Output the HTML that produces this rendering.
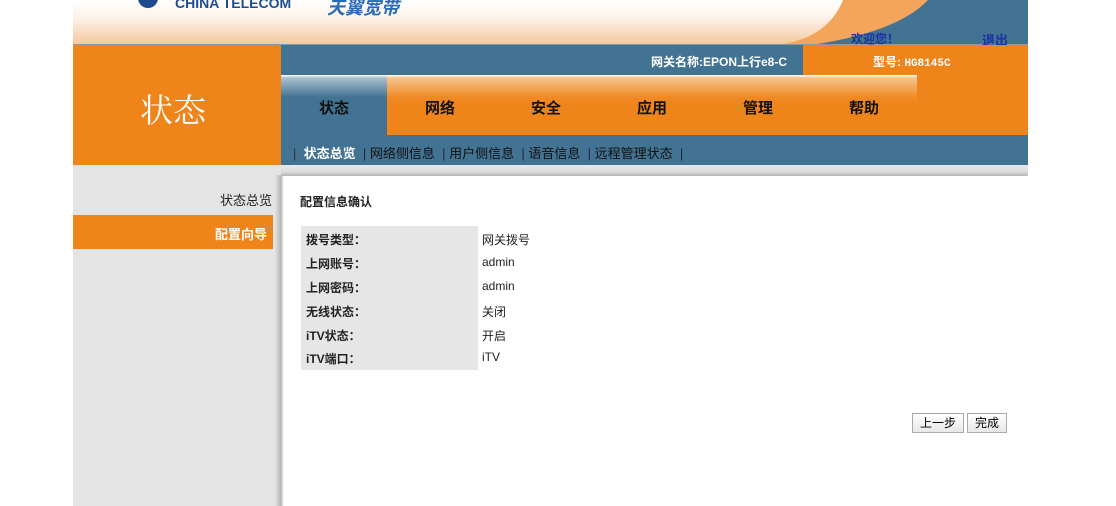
<!DOCTYPE html>
<html><head><meta charset="utf-8"><style>
body{margin:0;width:1116px;height:506px;background:#fff;font-family:"Liberation Sans","Noto Sans CJK SC",sans-serif;position:relative;overflow:hidden}
.a{position:absolute}
.tab{position:absolute;top:75px;width:106px;height:60px;font-weight:bold;font-size:15px;text-align:center;line-height:68px;color:#111;background:linear-gradient(#fff 0,#f6c38e 3px,#ef8a26 22px,#ef841b 30px)}
.sub{font-size:13px;color:#111}
.lab{font-weight:bold;font-size:12px;color:#222}
.val{font-size:12px;color:#222}
.btn{position:absolute;top:413px;height:18px;border:1px solid #aaa;background:linear-gradient(#fff,#e8e8e8);font-size:12px;text-align:center;line-height:18px;color:#000}
</style></head><body>
<svg class="a" style="left:73px;top:0" width="955" height="45">
<defs><linearGradient id="g" x1="0" y1="0" x2="0" y2="1"><stop offset="0" stop-color="#fff"/><stop offset="0.4" stop-color="#fdf2e8"/><stop offset="1" stop-color="#f4c79d"/></linearGradient></defs>
<rect width="955" height="45" fill="url(#g)"/>
<path d="M770 0 H955 V45 H705 Q755 38 770 0Z" fill="#f3a55b"/>
<path d="M855 0 H955 V45 H738 Q825 32 855 0Z" fill="#437392"/>
<path d="M0 44 H955 V45 H0Z" fill="#8a9aa5"/>
</svg>
<div class="a" style="left:138px;top:-6px;width:20px;height:14px;background:#1e4a8c;border-radius:0 0 10px 10px"></div>
<div class="a" style="left:175px;top:-5px;font-weight:bold;font-size:14px;color:#1d4d8f">CHINA TELECOM</div>
<div class="a" style="left:327px;top:-6px;font-weight:bold;font-style:italic;font-size:18px;color:#2a6bb8">天翼宽带</div>
<div class="a" style="left:851px;top:30px;font-weight:bold;font-size:12px;color:#1a2fa8">欢迎您！</div>
<div class="a" style="left:982px;top:30px;font-weight:bold;font-size:13px;color:#1a2fa8">退出</div>
<div class="a" style="left:73px;top:45px;width:208px;height:120px;background:#ef841b"></div>
<div class="a" style="left:140px;top:85px;font-size:33px;color:#fff;font-family:'Liberation Serif','Noto Serif CJK SC',serif">状态</div>
<div class="a" style="left:281px;top:45px;width:522px;height:30px;background:#437392"></div>
<div class="a" style="left:803px;top:45px;width:225px;height:90px;background:#ef841b"></div>
<div class="a" style="left:651px;top:53px;font-weight:bold;font-size:12px;color:#fff">网关名称:EPON上行e8-C</div>
<div class="a" style="left:873px;top:53px;font-weight:bold;font-size:12px;color:#fff">型号: <span style="font-family:'Liberation Mono',monospace;font-size:11px">HG8145C</span></div>
<div class="a" style="left:281px;top:75px;width:522px;height:60px;background:#ef841b"></div>
<div class="tab" style="left:281px;background:linear-gradient(#fff 0,#aac0d0 3px,#437392 22px)">状态</div>
<div class="tab" style="left:387px">网络</div>
<div class="tab" style="left:493px">安全</div>
<div class="tab" style="left:599px">应用</div>
<div class="tab" style="left:705px">管理</div>
<div class="tab" style="left:811px">帮助</div>
<div class="a" style="left:281px;top:135px;width:747px;height:30px;background:#437392"></div>
<div class="a sub" style="left:293px;top:143px;white-space:pre"><span style="color:#333">|</span>  <b style="color:#fff">状态总览</b>  <span style="color:#224">|</span> 网络侧信息  <span style="color:#224">|</span> 用户侧信息  <span style="color:#224">|</span> 语音信息  <span style="color:#224">|</span> 远程管理状态  <span style="color:#224">|</span></div>
<div class="a" style="left:73px;top:165px;width:208px;height:341px;background:#e4e4e4"></div>
<div class="a" style="left:275px;top:175px;width:8px;height:331px;background:linear-gradient(90deg,#e4e4e4,#b8b8b8 70%,#ddd)"></div>
<div class="a" style="left:281px;top:165px;width:747px;height:11px;background:linear-gradient(#e8e8e8,#ddd 60%,#b5b5b5)"></div>
<div class="a" style="left:220px;top:190px;font-size:13px;color:#222">状态总览</div>
<div class="a" style="left:73px;top:215px;width:200px;height:34px;background:#ef841b"></div>
<div class="a" style="left:215px;top:224px;font-weight:bold;font-size:13px;color:#fff">配置向导</div>
<div class="a" style="left:300px;top:193px;font-weight:bold;font-size:12px;color:#222">配置信息确认</div>
<div class="a" style="left:301px;top:226px;width:177px;height:144px;background:#e6e6e6"></div>
<div class="a lab" style="left:306px;top:231px">拨号类型：</div><div class="a val" style="left:482px;top:231px">网关拨号</div>
<div class="a lab" style="left:306px;top:255px">上网账号：</div><div class="a val" style="left:482px;top:255px">admin</div>
<div class="a lab" style="left:306px;top:279px">上网密码：</div><div class="a val" style="left:482px;top:279px">admin</div>
<div class="a lab" style="left:306px;top:303px">无线状态：</div><div class="a val" style="left:482px;top:303px">关闭</div>
<div class="a lab" style="left:306px;top:327px">iTV状态：</div><div class="a val" style="left:482px;top:327px">开启</div>
<div class="a lab" style="left:306px;top:350px">iTV端口：</div><div class="a val" style="left:482px;top:350px">iTV</div>
<div class="btn" style="left:912px;width:50px">上一步</div>
<div class="btn" style="left:967px;width:38px">完成</div>
</body></html>
